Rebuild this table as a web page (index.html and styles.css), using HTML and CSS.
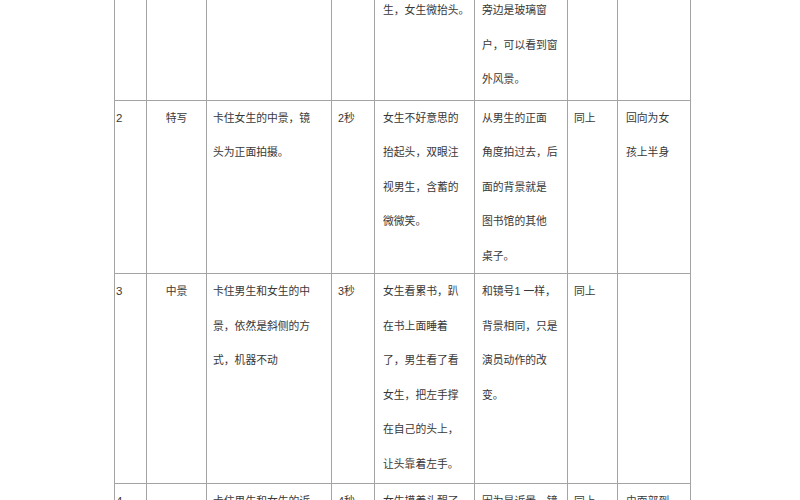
FILE: index.html
```html
<!DOCTYPE html>
<html lang="zh-CN">
<head>
<meta charset="utf-8">
<title>分镜头脚本</title>
<link rel="stylesheet" href="styles.css">
</head>
<body>
<table class="board">
  <colgroup>
    <col class="c1"><col class="c2"><col class="c3"><col class="c4">
    <col class="c5"><col class="c6"><col class="c7"><col class="c8">
  </colgroup>
  <tr class="r1">
    <td class="no"></td>
    <td class="shot"></td>
    <td class="desc"></td>
    <td class="time"></td>
    <td class="act">生，女生微抬头。</td>
    <td class="bg">旁边是玻璃窗<br>户，可以看到窗<br>外风景。</td>
    <td class="music"></td>
    <td class="note"></td>
  </tr>
  <tr>
    <td class="no">2</td>
    <td class="shot">特写</td>
    <td class="desc">卡住女生的中景，镜<br>头为正面拍摄。</td>
    <td class="time">2秒</td>
    <td class="act">女生不好意思的<br>抬起头，双眼注<br>视男生，含蓄的<br>微微笑。</td>
    <td class="bg">从男生的正面<br>角度拍过去，后<br>面的背景就是<br>图书馆的其他<br>桌子。</td>
    <td class="music">同上</td>
    <td class="note">回向为女<br>孩上半身</td>
  </tr>
  <tr class="r3">
    <td class="no">3</td>
    <td class="shot">中景</td>
    <td class="desc">卡住男生和女生的中<br>景，依然是斜侧的方<br>式，机器不动</td>
    <td class="time">3秒</td>
    <td class="act">女生看累书，趴<br>在书上面睡着<br>了，男生看了看<br>女生，把左手撑<br>在自己的头上，<br>让头靠着左手。</td>
    <td class="bg">和镜号1 一样，<br>背景相同，只是<br>演员动作的改<br>变。</td>
    <td class="music">同上</td>
    <td class="note"></td>
  </tr>
  <tr>
    <td class="no">4</td>
    <td class="shot"></td>
    <td class="desc">卡住男生和女生的近</td>
    <td class="time">4秒</td>
    <td class="act">女生摸着头醒了</td>
    <td class="bg">因为是近景，镜</td>
    <td class="music">同上</td>
    <td class="note">由面部到</td>
  </tr>
</table>
</body>
</html>
```

FILE: styles.css
```css
html, body {
  margin: 0;
  padding: 0;
  background: #ffffff;
}

body {
  height: 500px;
  overflow: hidden;
}

.board {
  margin: -8px 0 0 114px;
  width: 577px;
  border-collapse: collapse;
  table-layout: fixed;
  font-family: "Liberation Sans", "Noto Sans CJK SC", sans-serif;
  font-size: 10.8px;
  line-height: 34.5px;
  color: #383838;
}

.c1 { width: 32px; }
.c2 { width: 60px; }
.c3 { width: 125px; }
.c4 { width: 43px; }
.c5 { width: 100px; }
.c6 { width: 93px; }
.c7 { width: 50px; }
.c8 { width: 73px; }

.board td {
  border: 1px solid #a4a4a4;
  vertical-align: top;
  padding: 0;
  white-space: nowrap;
  overflow: hidden;
}

.board .r1 td {
  padding-bottom: 3px;
}

.board .r3 td {
  padding-bottom: 2px;
}

.board .no { padding-left: 1px; font-size: 11.5px; }
.board .shot { text-align: center; }
.board .desc { padding-left: 6px; }
.board .time { padding-left: 6px; }
.board .act { padding-left: 8px; }
.board .bg { padding-left: 7px; }
.board .music { padding-left: 6px; }
.board .note { padding-left: 8px; }
```
